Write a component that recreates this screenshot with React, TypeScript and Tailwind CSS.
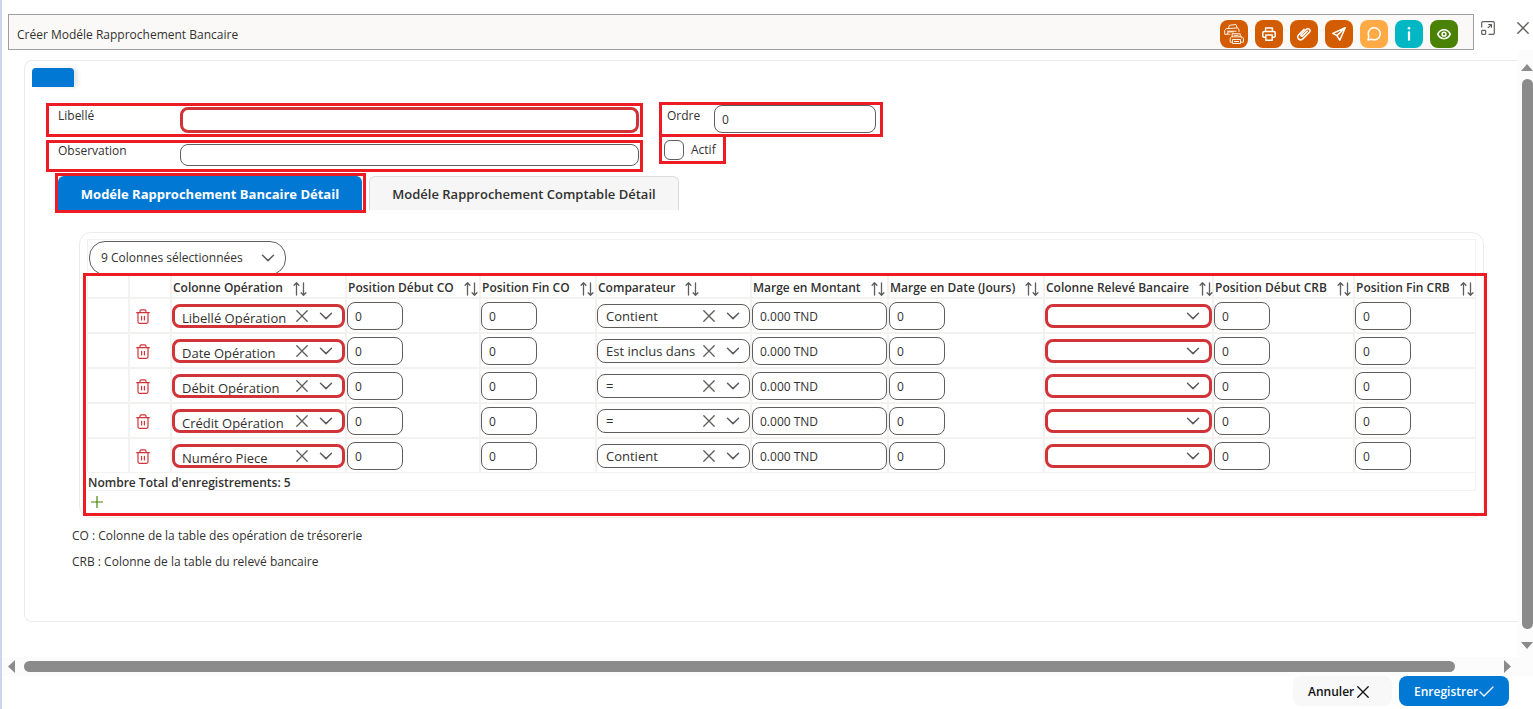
import { useState } from 'react';
import type { ReactNode } from 'react';
import { clsx } from 'clsx';

interface DetailRow {
  id: number;
  operation: string;
  comparator: string;
}

const initialRows: DetailRow[] = [
  { id: 1, operation: 'Libellé Opération', comparator: 'Contient' },
  { id: 2, operation: 'Date Opération', comparator: 'Est inclus dans' },
  { id: 3, operation: 'Débit Opération', comparator: '=' },
  { id: 4, operation: 'Crédit Opération', comparator: '=' },
  { id: 5, operation: 'Numéro Piece', comparator: 'Contient' },
];

const headers = [
  'Colonne Opération',
  'Position Début CO',
  'Position Fin CO',
  'Comparateur',
  'Marge en Montant',
  'Marge en Date (Jours)',
  'Colonne Relevé Bancaire',
  'Position Début CRB',
  'Position Fin CRB',
];

function CrossIcon({ className }: { className?: string }) {
  return (
    <svg viewBox="0 0 12 12" fill="none" stroke="currentColor" strokeWidth="1.3" strokeLinecap="round" className={clsx('shrink-0', className)}>
      <path d="M.8.8l10.4 10.4M11.2.8L.8 11.2" />
    </svg>
  );
}

function ChevronIcon() {
  return (
    <svg viewBox="0 0 14 8" fill="none" stroke="currentColor" strokeWidth="1.5" strokeLinecap="round" strokeLinejoin="round" className="pointer-events-none h-2 w-3.5 shrink-0 text-[#605e5c]">
      <path d="M1.5 1.2L7 6.6l5.5-5.4" />
    </svg>
  );
}

function SortIcon() {
  return (
    <svg viewBox="0 0 14 14" fill="none" stroke="currentColor" strokeWidth="1.3" strokeLinecap="round" strokeLinejoin="round" className="h-3.5 w-3.5 shrink-0 text-[#605e5c]">
      <path d="M3.5 13V.8M1.1 3.2L3.5.8l2.4 2.4M10.5 1v12.2M8.1 10.8l2.4 2.4 2.4-2.4" />
    </svg>
  );
}

function TrashIcon() {
  return (
    <svg viewBox="0 0 14 15" fill="none" stroke="currentColor" strokeWidth="1.2" strokeLinecap="round" strokeLinejoin="round" className="h-[15px] w-3.5">
      <path d="M.7 3.7h12.6M2 3.7v9.1c0 .9.6 1.5 1.5 1.5h7c.9 0 1.5-.6 1.5-1.5V3.7M4 3.5V2c0-.7.5-1.2 1.2-1.2h3.6c.7 0 1.2.5 1.2 1.2v1.5M5.6 7.3v3.6M8.4 7.3v3.6" />
    </svg>
  );
}

function PrintersIcon() {
  return (
    <svg viewBox="0 0 20 20" fill="none" stroke="currentColor" strokeWidth=".9" strokeLinejoin="round" className="h-5 w-5">
      <path d="M4.5 4.5l.8-3.2 6.6-.8 1.2 3.4M2.2 10.3H.7V6.2l1.6-1.6 11.5-.7 1.2 2v2M3 7.2h9.5M3.5 10.2l.6-2.3h5.4M2 10.2h4.3" />
      <path d="M8.2 13V9.7h8V13M6.2 18.2V14l1.3-1.2h10.7l1.2 1.2v4.2h-2.6M6.2 18.2h2M8.5 15.5h8v4h-8zM10 17.5h5M9.8 11.3h4.8M17 14h1" />
    </svg>
  );
}

// The toolbar icons share one 14px grid
function ToolIcon({ children }: { children: ReactNode }) {
  return (
    <svg viewBox="0 0 14 14" fill="none" stroke="currentColor" strokeWidth="1.5" strokeLinecap="round" strokeLinejoin="round" className="h-3.5 w-3.5">
      {children}
    </svg>
  );
}

interface ActionButtonProps {
  label: string;
  className: string;
  children: ReactNode;
}

function ActionButton({ label, className, children }: ActionButtonProps) {
  return (
    <button type="button" aria-label={label} className={clsx('flex h-7 w-7 items-center justify-center rounded-lg text-white', className)}>
      {children}
    </button>
  );
}

function NumberCell({ label, value = '0', wide }: { label: string; value?: string; wide?: boolean }) {
  return (
    <td className="border border-[#f3f2f1] p-0">
      <input
        aria-label={label}
        defaultValue={value}
        className={clsx('block h-7 rounded-lg border border-[#605e5c] bg-white px-[7px] pt-0.5', wide ? 'w-full' : 'w-14')}
      />
    </td>
  );
}

interface DropdownProps {
  label: string;
  value?: string;
  required?: boolean;
}

function DropdownCell({ label, value = '', required }: DropdownProps) {
  const [selected, setSelected] = useState(value);

  return (
    <td className="border border-[#f3f2f1] p-0">
      <div
        className={clsx(
          'flex h-6 items-center overflow-hidden rounded-lg bg-white pr-[9px]',
          required ? 'border-[3px] border-[#d13438] pl-[7px]' : 'border border-[#605e5c] pl-2',
        )}
      >
        <select
          aria-label={label}
          value={selected}
          onChange={(e) => setSelected(e.target.value)}
          className={clsx('min-w-0 flex-1 appearance-none bg-transparent text-[13px] leading-5 outline-none', required && 'pt-1')}
        >
          <option value="" />
          {value && <option value={value}>{value}</option>}
        </select>
        {selected && (
          <button type="button" aria-label="Effacer" onClick={() => setSelected('')} className="mr-[11px] text-[#605e5c]">
            <CrossIcon className="h-3 w-3" />
          </button>
        )}
        <ChevronIcon />
      </div>
    </td>
  );
}

function DetailTable() {
  const [rows, setRows] = useState(initialRows);

  return (
    <div className="relative">
      <table className="w-full table-fixed border-separate border-spacing-0">
        <colgroup>
          <col className="w-[42px]" />
          <col className="w-[42px]" />
          <col className="w-[175px]" />
          <col className="w-[134px]" />
          <col className="w-[116px]" />
          <col className="w-[155px]" />
          <col className="w-[137px]" />
          <col className="w-[156px]" />
          <col className="w-[169px]" />
          <col className="w-[141px]" />
          <col className="w-[122px]" />
        </colgroup>
        <thead>
          <tr className="h-6">
            <th className="border border-[#f3f2f1] p-0" />
            <th className="border border-[#f3f2f1] p-0" />
            {headers.map((header) => (
              <th key={header} className="border border-[#f3f2f1] p-0 pt-1 pl-px text-left font-semibold">
                <span className="flex items-end gap-2.5 whitespace-nowrap">
                  {header}
                  <SortIcon />
                </span>
              </th>
            ))}
          </tr>
        </thead>
        <tbody>
          {rows.map((row) => (
            <tr key={row.id} className="h-[35px]">
              <td className="border border-[#f3f2f1] p-0" />
              <td className="border border-[#f3f2f1] p-0 pt-0.5 pl-1.5">
                <button
                  type="button"
                  aria-label="Supprimer"
                  onClick={() => setRows(rows.filter((r) => r.id !== row.id))}
                  className="block text-[#d13438]"
                >
                  <TrashIcon />
                </button>
              </td>
              <DropdownCell label={headers[0]} value={row.operation} required />
              <NumberCell label={headers[1]} />
              <NumberCell label={headers[2]} />
              <DropdownCell label={headers[3]} value={row.comparator} />
              <NumberCell label={headers[4]} value="0.000 TND" wide />
              <NumberCell label={headers[5]} />
              <DropdownCell label={headers[6]} required />
              <NumberCell label={headers[7]} />
              <NumberCell label={headers[8]} />
            </tr>
          ))}
        </tbody>
      </table>
      <div className="h-[18px] border-r border-b border-[#f3f2f1] pl-px leading-5 font-semibold">
        Nombre Total d'enregistrements: {rows.length}
      </div>
      <button
        type="button"
        aria-label="Ajouter"
        onClick={() => setRows([...rows, { id: Date.now(), operation: '', comparator: '' }])}
        className="flex h-[22px] w-5 items-center justify-center text-[#498205]"
      >
        <svg viewBox="0 0 12 12" stroke="currentColor" strokeWidth="1.2" strokeLinecap="round" className="h-3 w-3">
          <path d="M6 .5v11M.5 6h11" />
        </svg>
      </button>
      <div className="pointer-events-none absolute -top-px -right-[11px] -bottom-[3px] -left-1 border-[3px] border-[#ed1c24]" />
    </div>
  );
}

export default function App() {
  return (
    <div className="flex min-h-screen flex-col overflow-hidden border-l-2 border-[#ccd6e8] bg-white font-['Open_Sans','Noto_Sans',sans-serif] text-[12px] leading-4 text-[#323130]">
      <header className="flex items-start pt-3.5 pl-1.5">
        <div className="flex h-9 flex-1 items-end justify-between border border-[#a19f9d] bg-[#faf9f8] pr-[15px] pb-px pl-2">
          <h1 className="pb-[5px]">Créer Modéle Rapprochement Bancaire</h1>
          <div className="flex gap-[7px]">
            <ActionButton label="Imprimer tout" className="bg-[#d35c00]">
              <PrintersIcon />
            </ActionButton>
            <ActionButton label="Imprimer" className="bg-[#d35c00]">
              <ToolIcon>
                <path d="M3.6 4.2V.9h6.8v3.3M3.6 10.3H2.2c-.8 0-1.4-.6-1.4-1.4V5.8c0-.8.6-1.4 1.4-1.4h9.6c.8 0 1.4.6 1.4 1.4v3.1c0 .8-.6 1.4-1.4 1.4h-1.4M3.8 7.9h6.4v5.3H3.8z" />
              </ToolIcon>
            </ActionButton>
            <ActionButton label="Pièces jointes" className="bg-[#d35c00]">
              <ToolIcon>
                <path d="M10.3 4.2L5.6 8.9c-.5.5-1.1.5-1.5.1s-.4-1 .1-1.5l5-5c1-1 2.3-1.1 3.2-.2s.8 2.2-.2 3.2l-5.9 5.9c-1.5 1.5-3.5 1.7-4.7.5s-1-3.2.5-4.7l5-5" />
              </ToolIcon>
            </ActionButton>
            <ActionButton label="Envoyer" className="bg-[#d35c00]">
              <ToolIcon>
                <path d="M13.2.8L.8 6.4l4.1 2.2 2.9 4.6zM4.9 8.6L13.2.8" />
              </ToolIcon>
            </ActionButton>
            <ActionButton label="Commentaires" className="bg-[#ffaa44]">
              <ToolIcon>
                <path d="M1 13l.8-3.7A6 6 0 1 1 4.7 12.200z" />
              </ToolIcon>
            </ActionButton>
            <ActionButton label="Informations" className="bg-[#00b7c3]">
              <svg viewBox="0 0 4 14" fill="currentColor" className="h-3.5 w-1">
                <circle cx="2" cy="1.3" r="1.3" />
                <rect x=".9" y="4.2" width="2.2" height="9.6" rx="1" />
              </svg>
            </ActionButton>
            <ActionButton label="Aperçu" className="bg-[#498205]">
              <ToolIcon>
                <path d="M.7 7.200C2 4.500 4.300 2.700 7 2.700s5 1.800 6.300 4.500C12 9.900 9.700 11.700 7 11.700S2 9.900.7 7.200z" />
                <circle cx="7" cy="7.200" r="1.900" />
              </ToolIcon>
            </ActionButton>
          </div>
        </div>
        <div className="flex items-center gap-[22px] pt-[7px] pr-1 pl-[7px] text-[#605e5c]">
          <button type="button" aria-label="Agrandir">
            <svg viewBox="0 0 14 14" fill="none" stroke="currentColor" strokeWidth="1.2" strokeLinejoin="round" className="h-3.5 w-3.5">
              <path d="M.7 6.5V2C.7 1.2 1.2.7 2 .7h10c.8 0 1.3.5 1.3 1.3v10c0 .8-.5 1.3-1.3 1.3H7.5M6.7 7.2l3.6-3.6M7.2 3.5h3.2v3.2" />
              <rect x=".7" y="9.3" width="4" height="4" rx=".8" />
            </svg>
          </button>
          <button type="button" aria-label="Fermer">
            <CrossIcon className="h-3 w-3" />
          </button>
        </div>
      </header>

      <div className="flex flex-1">
        <main className="min-w-0 flex-1 pt-2.5 pl-[22px]">
          <section className="rounded-l-lg border-y border-l border-[#edebe9] pt-[7px] pb-[51px]">
            <div className="ml-[7px] h-[19px] w-[42px] rounded-t bg-[#0078d4] shadow-[4px_0_4px_rgba(0,0,0,0.1)]" />

            <form className="mt-[15px] ml-[21px] flex items-start gap-4">
              <div className="flex max-w-[597px] flex-1 flex-col gap-[3px] pt-px">
                <div className="flex h-[34px] items-start border-[3px] border-[#ed1c24] pr-px pl-[9px]">
                  <label htmlFor="libelle" className="w-[122px] pt-0.5">
                    Libellé
                  </label>
                  <input id="libelle" className="mt-px h-[26px] min-w-0 flex-1 rounded-lg border-[3px] border-[#d13438] px-2" />
                </div>
                <div className="flex h-8 items-start border-[3px] border-[#ed1c24] pr-px pl-[9px]">
                  <label htmlFor="observation" className="w-[122px]">
                    Observation
                  </label>
                  <input id="observation" className="mt-px h-[22px] min-w-0 flex-1 rounded-lg border border-[#605e5c] px-2" />
                </div>
              </div>
              <div>
                <div className="flex h-[35px] w-56 items-start border-[3px] border-[#ed1c24] pr-1 pl-[5px]">
                  <label htmlFor="ordre" className="w-[47px] pt-[3px]">
                    Ordre
                  </label>
                  <input id="ordre" defaultValue="0" className="h-7 min-w-0 flex-1 rounded-lg border border-[#605e5c] px-[7px] pt-px" />
                </div>
                <div className="-mt-[3px] flex h-[30px] w-[67px] items-center gap-[7px] border-[3px] border-[#ed1c24] pt-0.5 pl-0.5">
                  <input id="actif" type="checkbox" className="h-5 w-5 shrink-0 appearance-none rounded-md border border-[#605e5c] checked:bg-[#0078d4]" />
                  <label htmlFor="actif">Actif</label>
                </div>
              </div>
            </form>

            <div role="tablist" className="mt-px ml-[30px] flex gap-[3px] text-[13px]">
              <div className="border-[3px] border-[#ed1c24] pr-px">
                <button type="button" role="tab" aria-selected="true" className="h-[34px] w-[304px] rounded-t-md bg-[#0078d4] pt-0.5 font-bold whitespace-nowrap text-white">
                  Modéle Rapprochement Bancaire Détail
                </button>
              </div>
              <button type="button" role="tab" aria-selected="false" className="mt-[3px] h-[34px] w-[310px] rounded-t-md border-x border-t border-[#dcdcdc] bg-[#f6f6f6] font-semibold whitespace-nowrap">
                Modéle Rapprochement Comptable Détail
              </button>
            </div>

            <div className="mt-[19px] mr-[34px] ml-[54px] rounded-xl border border-[#edebe9] pt-1.5 pr-[7px] pb-1 pl-[7px]">
              <div className="h-[35px] border-x border-t border-[#f3f2f1] pt-px pl-px">
                <div className="flex h-[34px] w-[197px] items-center rounded-2xl border border-[#605e5c] pr-2.5 pl-[11px]">
                  <select aria-label="Colonnes affichées" className="min-w-0 flex-1 appearance-none bg-transparent outline-none">
                    <option>9 Colonnes sélectionnées</option>
                  </select>
                  <ChevronIcon />
                </div>
              </div>
              <DetailTable />
            </div>

            <div className="mt-2.5 ml-[47px] flex flex-col gap-2.5">
              <p>CO : Colonne de la table des opération de trésorerie</p>
              <p>CRB : Colonne de la table du relevé bancaire</p>
            </div>
          </section>
        </main>

        <div aria-hidden="true" className="flex w-[15px] shrink-0 flex-col items-end bg-[#fcfcfc] pt-3.5 pb-2">
          <svg viewBox="0 0 12 7" fill="#8b8b8b" className="h-[7px] w-3">
            <path d="M6 0l6 7H0z" />
          </svg>
          <div className="mt-2 mb-[13px] w-[11px] flex-1 rounded-full bg-[#8b8b8b]" />
          <svg viewBox="0 0 12 7" fill="#8b8b8b" className="h-[7px] w-3">
            <path d="M0 0h12L6 7z" />
          </svg>
        </div>
      </div>

      <div aria-hidden="true" className="flex h-[19px] items-center gap-[9px] bg-[#fcfcfc] pr-[22px] pl-1.5">
        <svg viewBox="0 0 7 13" fill="#8b8b8b" className="h-[13px] w-[7px]">
          <path d="M7 0v13L0 6.5z" />
        </svg>
        <div className="mr-10 h-[11px] flex-1 rounded-full bg-[#8b8b8b]" />
        <svg viewBox="0 0 7 13" fill="#8b8b8b" className="h-[13px] w-[7px]">
          <path d="M0 0l7 6.5L0 13z" />
        </svg>
      </div>

      <footer className="flex justify-end gap-[7px] pr-6 pb-[3px] font-semibold">
        <button type="button" className="flex h-[30px] w-[99px] items-center gap-[3px] rounded-lg bg-[#f8f8f8] pt-0.5 pl-[15px] text-[#111111]">
          Annuler
          <CrossIcon className="h-3 w-3" />
        </button>
        <button type="button" className="flex h-[30px] w-[110px] items-center gap-px rounded-lg bg-[#0078d4] pt-0.5 pl-[15px] text-white">
          Enregistrer
          <svg viewBox="0 0 15 11" fill="none" stroke="currentColor" strokeWidth="1.3" strokeLinecap="round" strokeLinejoin="round" className="mb-0.5 h-[11px] w-[15px] shrink-0">
            <path d="M1 6l4 4L14 1" />
          </svg>
        </button>
      </footer>
    </div>
  );
}
